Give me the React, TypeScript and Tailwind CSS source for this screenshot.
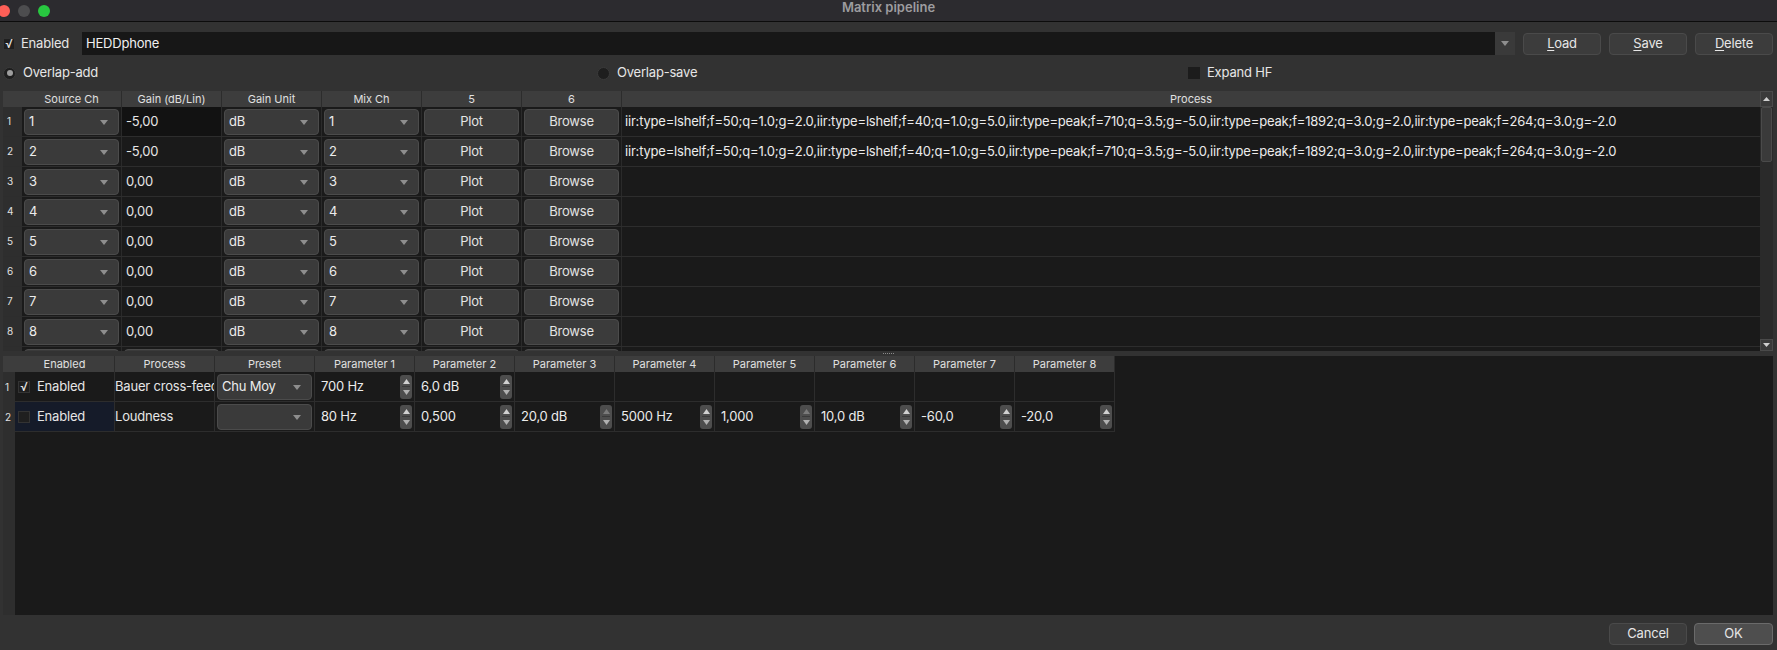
import React from "react";

const PROCESS =
  "iir:type=lshelf;f=50;q=1.0;g=2.0,iir:type=lshelf;f=40;q=1.0;g=5.0,iir:type=peak;f=710;q=3.5;g=-5.0,iir:type=peak;f=1892;q=3.0;g=2.0,iir:type=peak;f=264;q=3.0;g=-2.0";

const FONT = { fontFamily: "Inter, 'Noto Sans', 'Liberation Sans', sans-serif" };

// small down caret used by combo boxes
function Caret() {
  return (
    <svg width="8" height="5" viewBox="0 0 8 5" className="shrink-0">
      <path d="M0 0h8L4 5z" fill="#8e8e8e" />
    </svg>
  );
}

function Combo({ value }: { value: string }) {
  return (
    <div className="m-[2px] flex h-[26px] items-center justify-between rounded-[4px] border border-[#4b4b4b] bg-[#3a3a3a] pl-[4px] pr-[10px] text-[13px] text-[#ececec]">
      <span className="whitespace-nowrap">{value}</span>
      <Caret />
    </div>
  );
}

function PushButton({ label }: { label: string }) {
  return (
    <div className="m-[2px] flex h-[26px] items-center justify-center rounded-[4px] border border-[#4b4b4b] bg-[#3b3b3b] text-[13px] text-[#e4e4e4]">
      {label}
    </div>
  );
}

// up/down arrows at the end of spin boxes
function Spinner({ upDim }: { upDim?: boolean }) {
  return (
    <div className="flex h-[24px] w-[12px] shrink-0 flex-col items-center justify-between rounded-[3px] bg-[#4d4d4d] py-[4px]">
      <svg width="7" height="5" viewBox="0 0 7 5">
        <path d="M0 5L3.5 0 7 5z" fill={upDim ? "#7a7a7a" : "#d0d0d0"} />
      </svg>
      <div className="h-px w-[8px] bg-[#3a3a3a]" />
      <svg width="7" height="5" viewBox="0 0 7 5">
        <path d="M0 0h7L3.5 5z" fill="#b0b0b0" />
      </svg>
    </div>
  );
}

function SpinBox({ value, upDim }: { value: string; upDim?: boolean }) {
  return (
    <div className="flex h-full items-center justify-between pl-[6px] pr-[2px]">
      <span className="text-[13px] text-[#ececec]">{value}</span>
      <Spinner upDim={upDim} />
    </div>
  );
}

function Check({ checked }: { checked: boolean }) {
  return (
    <div className="flex h-[12px] w-[12px] shrink-0 items-center justify-center border border-[#333] bg-[#1f1f1f] text-[12px] leading-none text-[#e6e6e6]">
      {checked ? "√" : ""}
    </div>
  );
}

function Radio({ on }: { on: boolean }) {
  return (
    <div className="flex h-[13px] w-[13px] items-center justify-center rounded-full border border-[#3a3a3a] bg-[#1e1e1e]">
      {on && <div className="h-[6px] w-[6px] rounded-full bg-[#9e9e9e]" />}
    </div>
  );
}

function Btn({ label, first, rest, def }: { label?: string; first?: string; rest?: string; def?: boolean }) {
  return (
    <div
      className={`flex h-[22px] items-center justify-center rounded-[4px] border text-[13px] text-[#e6e6e6] ${
        def ? "border-[#6a6a6a] bg-[#4e4e4e]" : "border-[#4a4a4a] bg-[#3c3c3c]"
      }`}
    >
      {label ?? (
        <span>
          <u className="underline-offset-2">{first}</u>
          {rest}
        </span>
      )}
    </div>
  );
}

const topCols = ["Source Ch", "Gain (dB/Lin)", "Gain Unit", "Mix Ch", "5", "6"];
const botCols = ["Enabled", "Process", "Preset", "Parameter 1", "Parameter 2", "Parameter 3", "Parameter 4", "Parameter 5", "Parameter 6", "Parameter 7", "Parameter 8"];

export default function App() {
  const rows = [1, 2, 3, 4, 5, 6, 7, 8];
  const params2 = [
    { v: "80 Hz" },
    { v: "0,500" },
    { v: "20,0 dB", dim: true },
    { v: "5000 Hz" },
    { v: "1,000", dim: true },
    { v: "10,0 dB" },
    { v: "-60,0" },
    { v: "-20,0" },
  ];

  return (
    <div className="flex h-[650px] w-[1777px] flex-col overflow-hidden bg-[#323232] tracking-[-0.2px] text-[#e6e6e6]" style={FONT}>
      {/* Title bar */}
      <div className="relative flex h-[22px] shrink-0 items-center border-b border-[#0c0c0c] bg-[#2c2b2f]">
        <div className="ml-[-2px] flex items-center gap-[8px]">
          <div className="h-[12px] w-[12px] rounded-full bg-[#fe5f57]" />
          <div className="h-[12px] w-[12px] rounded-full bg-[#4d4d4f]" />
          <div className="h-[12px] w-[12px] rounded-full bg-[#28c840]" />
        </div>
        <div className="absolute inset-x-0 top-0 text-center text-[13px] font-semibold leading-[14px] tracking-normal text-[#9d9c9f]">Matrix pipeline</div>
      </div>

      {/* Preset row */}
      <div className="mt-[10px] flex h-[23px] items-center pl-[3px] pr-[4px]">
        <Check checked />
        <span className="ml-[6px] w-[61px] text-[13px]">Enabled</span>
        <div className="flex h-full flex-1 items-center bg-[#171717] pl-[4px] text-[13px] text-[#f0f0f0]">HEDDphone</div>
        <div className="flex h-full w-[20px] items-center justify-center bg-[#3a3a3a]">
          <Caret />
        </div>
        <div className="ml-[8px] flex gap-[8px]">
          <div className="w-[78px]"><Btn first="L" rest="oad" /></div>
          <div className="w-[78px]"><Btn first="S" rest="ave" /></div>
          <div className="w-[78px]"><Btn first="D" rest="elete" /></div>
        </div>
      </div>

      {/* Mode options */}
      <div className="mt-[8px] grid h-[20px] grid-cols-3 items-center pl-[3px] pr-[4px] text-[13px]">
        <div className="flex items-center gap-[7px]"><Radio on /> Overlap-add</div>
        <div className="flex items-center gap-[7px] pl-[4px]"><Radio on={false} /> Overlap-save</div>
        <div className="flex items-center gap-[7px] pl-[5px]">
          <div className="h-[12px] w-[12px] bg-[#1c1c1c]" /> Expand HF
        </div>
      </div>

      {/* Matrix table */}
      <div className="ml-[3px] mr-[4px] mt-[8px] flex h-[260px] shrink-0">
        <div className="flex min-w-0 flex-1 flex-col overflow-hidden">
          <div className="flex h-[16px] shrink-0 bg-[#3d3d3d] text-[11px] leading-[16px] tracking-normal text-[#e0e0e0]">
            <div className="w-[19px] shrink-0" />
            {topCols.map((c) => (
              <div key={c} className="w-[100px] shrink-0 border-r border-[#2c2c2c] text-center">{c}</div>
            ))}
            <div className="flex-1 text-center">Process</div>
          </div>
          <div className="flex-1 overflow-hidden bg-[#1a1a1a]">
            {rows.map((r) => (
              <div key={r} className="flex h-[30px] border-b border-[#2d2d2d]">
                <div className="flex w-[19px] shrink-0 items-center bg-[#2e2e2e] pl-[4px] text-[10px] text-[#e0e0e0]">{r}</div>
                <div className="w-[100px] shrink-0 border-r border-[#2a2a2a]"><Combo value={String(r)} /></div>
                <div className={`flex w-[100px] shrink-0 items-center border-r border-[#2a2a2a] pl-[4px] text-[13px] ${r === 1 ? "bg-[#121212]" : ""}`}>
                  {r <= 2 ? "-5,00" : "0,00"}
                </div>
                <div className="w-[100px] shrink-0 border-r border-[#2a2a2a]"><Combo value="dB" /></div>
                <div className="w-[100px] shrink-0 border-r border-[#2a2a2a]"><Combo value={String(r)} /></div>
                <div className="w-[100px] shrink-0 border-r border-[#2a2a2a]"><PushButton label="Plot" /></div>
                <div className="w-[100px] shrink-0 border-r border-[#2a2a2a]"><PushButton label="Browse" /></div>
                <div className="flex min-w-0 flex-1 items-center overflow-hidden whitespace-nowrap pl-[3px] text-[13px] text-[#ececec]">
                  {r <= 2 ? PROCESS : ""}
                </div>
              </div>
            ))}
            {/* top edge of the next row, scrolled out of view */}
            <div className="flex h-[30px]">
              <div className="w-[19px] shrink-0 bg-[#2e2e2e]" />
              {[0, 1, 2, 3, 4, 5].map((i) => (
                <div key={i} className="w-[100px] shrink-0 border-r border-[#2a2a2a] px-[2px] pt-[2px]">
                  <div className="h-[26px] rounded-[4px] border border-[#4b4b4b] bg-[#3a3a3a]" />
                </div>
              ))}
            </div>
          </div>
        </div>
        {/* scrollbar */}
        <div className="flex w-[13px] shrink-0 flex-col bg-[#2a2a2a]">
          <div className="flex h-[16px] items-center justify-center border border-[#4a4a4a] bg-[#3a3a3a]">
            <svg width="7" height="4" viewBox="0 0 7 4"><path d="M0 4L3.5 0 7 4z" fill="#cfcfcf" /></svg>
          </div>
          <div className="mx-[1px] h-[55px] rounded-[2px] border border-[#4a4a4a] bg-[#3a3a3a]" />
          <div className="flex-1" />
          <div className="flex h-[12px] items-center justify-center border border-[#4a4a4a] bg-[#3a3a3a]">
            <svg width="7" height="4" viewBox="0 0 7 4"><path d="M0 0h7L3.5 4z" fill="#cfcfcf" /></svg>
          </div>
        </div>
      </div>

      {/* splitter */}
      <div className="flex h-[5px] shrink-0 items-center justify-center">
        <div className="flex gap-[1px]">
          {[0, 1, 2, 3, 4, 5].map((i) => (
            <div key={i} className="h-px w-px bg-[#8a8a8a]" />
          ))}
        </div>
      </div>

      {/* Filter pipeline table */}
      <div className="ml-[3px] mr-[4px] flex h-[259px] shrink-0 flex-col bg-[#1a1a1a]">
        <div className="flex h-[16px] shrink-0 text-[11px] leading-[16px] tracking-normal text-[#e0e0e0]">
          <div className="w-[12px] shrink-0 bg-[#3d3d3d]" />
          {botCols.map((c) => (
            <div key={c} className="w-[100px] shrink-0 border-r border-[#2c2c2c] bg-[#3d3d3d] text-center">{c}</div>
          ))}
        </div>
        <div className="flex flex-1">
          <div className="w-[12px] shrink-0 bg-[#2e2e2e] text-[10px] text-[#e0e0e0]">
            <div className="flex h-[30px] items-center pl-[2px]">1</div>
            <div className="flex h-[30px] items-center pl-[2px]">2</div>
          </div>
          <div className="flex-1">
            {/* row 1 */}
            <div className="flex h-[30px]">
              <div className="flex w-[100px] shrink-0 items-center gap-[7px] border-b border-r border-[#2d2d2d] pl-[3px] text-[13px]">
                <Check checked /> Enabled
              </div>
              <div className="flex w-[100px] shrink-0 items-center overflow-hidden whitespace-nowrap border-b border-r border-[#2d2d2d] text-[13px]">
                Bauer cross-feed
              </div>
              <div className="w-[100px] shrink-0 border-b border-r border-[#2d2d2d]"><Combo value="Chu Moy" /></div>
              <div className="w-[100px] shrink-0 border-b border-r border-[#2d2d2d]"><SpinBox value="700 Hz" /></div>
              <div className="w-[100px] shrink-0 border-b border-r border-[#2d2d2d]"><SpinBox value="6,0 dB" /></div>
              {[0, 1, 2, 3, 4, 5].map((i) => (
                <div key={i} className="w-[100px] shrink-0 border-b border-r border-[#2d2d2d]" />
              ))}
            </div>
            {/* row 2 */}
            <div className="flex h-[30px]">
              <div className="flex w-[100px] shrink-0 items-center gap-[7px] border-b border-r border-[#2d2d2d] bg-[#151b29] pl-[3px] text-[13px]">
                <Check checked={false} /> Enabled
              </div>
              <div className="flex w-[100px] shrink-0 items-center border-b border-r border-[#2d2d2d] text-[13px]">Loudness</div>
              <div className="w-[100px] shrink-0 border-b border-r border-[#2d2d2d]"><Combo value="" /></div>
              {params2.map((p) => (
                <div key={p.v} className="w-[100px] shrink-0 border-b border-r border-[#2d2d2d]">
                  <SpinBox value={p.v} upDim={p.dim} />
                </div>
              ))}
            </div>
          </div>
        </div>
      </div>

      {/* dialog buttons */}
      <div className="flex flex-1 items-start justify-end gap-[7px] pr-[4px] pt-[8px]">
        <div className="w-[78px]"><Btn label="Cancel" /></div>
        <div className="w-[79px]"><Btn label="OK" def /></div>
      </div>
    </div>
  );
}
